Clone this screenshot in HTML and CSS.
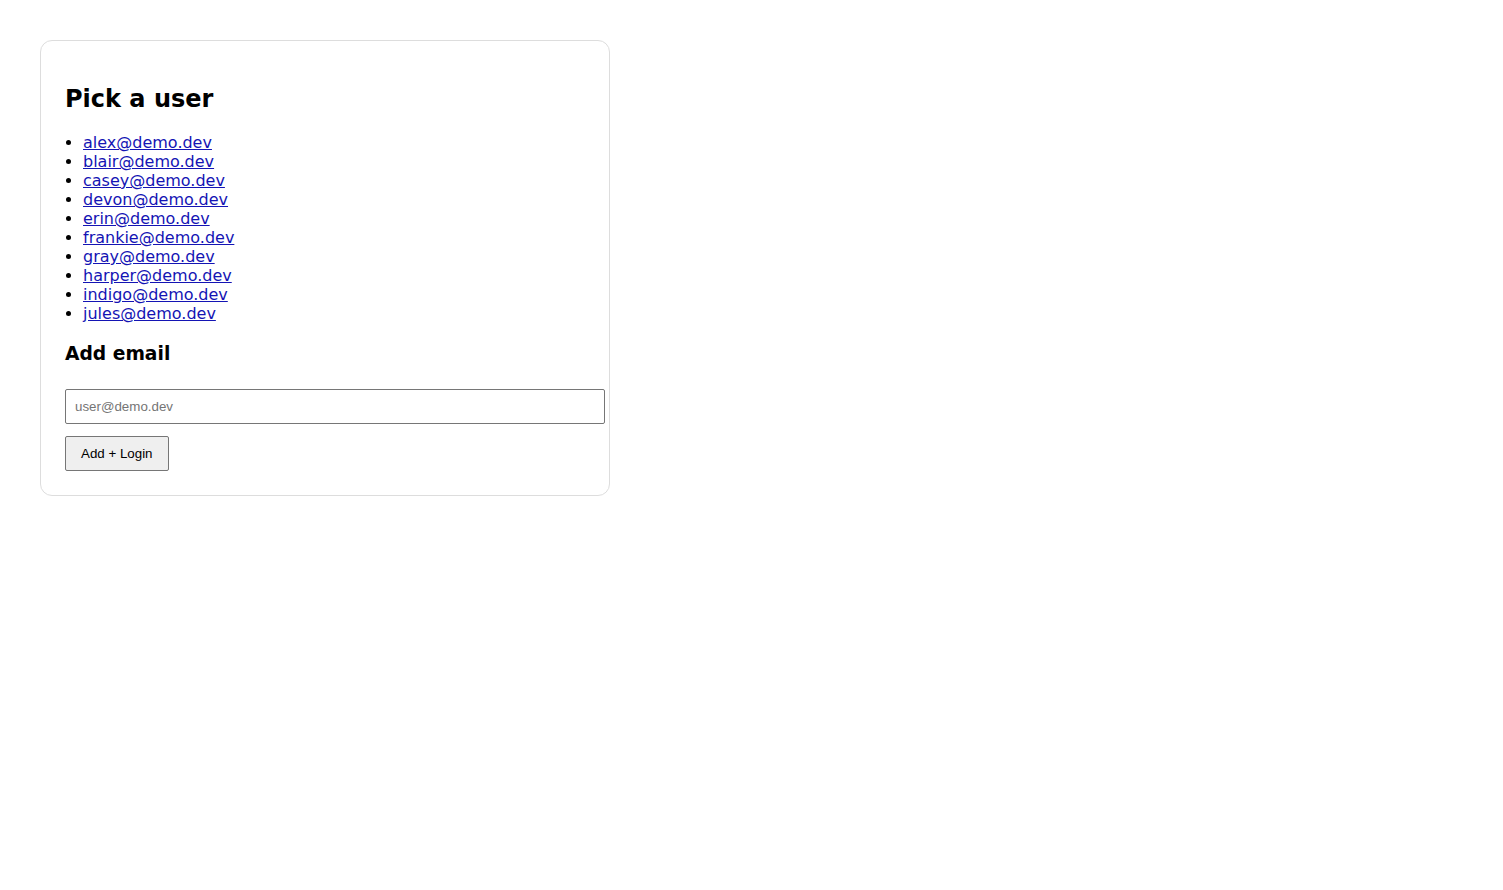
FILE: index.html
```html
<!DOCTYPE html>
<html>
<head>
<meta charset="utf-8">
<link rel="stylesheet" href="styles.css">
</head>
<body>
<div class="card">
  <h1 class="title">Pick a user</h1>
  <ul class="users">
    <li><a href="#">alex@demo.dev</a></li>
    <li><a href="#">blair@demo.dev</a></li>
    <li><a href="#">casey@demo.dev</a></li>
    <li><a href="#">devon@demo.dev</a></li>
    <li><a href="#">erin@demo.dev</a></li>
    <li><a href="#">frankie@demo.dev</a></li>
    <li><a href="#">gray@demo.dev</a></li>
    <li><a href="#">harper@demo.dev</a></li>
    <li><a href="#">indigo@demo.dev</a></li>
    <li><a href="#">jules@demo.dev</a></li>
  </ul>
  <h2 class="subtitle">Add email</h2>
  <form class="add-form">
    <input class="email" type="email" placeholder="user@demo.dev">
    <button class="btn" type="button">Add + Login</button>
  </form>
</div>
</body>
</html>
```

FILE: styles.css
```css
body {
  margin: 0;
  padding: 40px;
  font-family: "DejaVu Sans", sans-serif;
  background: #fff;
}
.card {
  width: 520px;
  padding: 24px;
  border: 1px solid #ddd;
  border-radius: 12px;
}
.title {
  font-size: 24px;
  margin: 20px 0 20px;
}
.users {
  margin: 16px 0;
  padding-left: 18px;
  font-size: 16px;
}
.users a {
  color: #1414b4;
}
.subtitle {
  font-size: 18.7px;
  margin: 20px 0 18px;
}
.add-form {
  margin-top: 25px;
}
.email {
  display: block;
  width: 100%;
  padding: 9px 9px;
  border: 1px solid #767676;
  border-radius: 2px;
  font-family: "Liberation Sans", Arial, sans-serif;
  font-size: 13.33px;
  margin: 0 0 12px;
}
.btn {
  padding: 9px 15px;
  border: 1px solid #767676;
  border-radius: 2px;
  background: #efefef;
  font-family: "Liberation Sans", Arial, sans-serif;
  font-size: 13.33px;
  color: #000;
}
```
